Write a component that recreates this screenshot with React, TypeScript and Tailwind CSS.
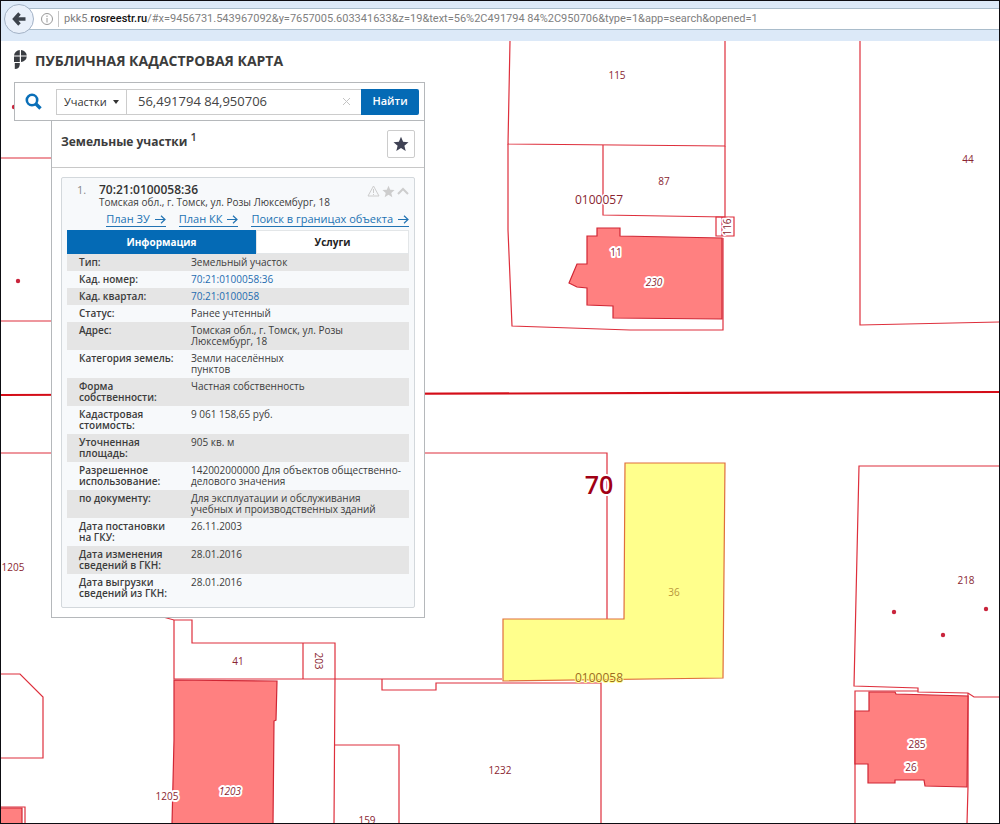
import React, { useState } from 'react';

const rows = [
  { label: 'Тип:', value: 'Земельный участок' },
  { label: 'Кад. номер:', value: '70:21:0100058:36', link: true },
  { label: 'Кад. квартал:', value: '70:21:0100058', link: true },
  { label: 'Статус:', value: 'Ранее учтенный' },
  { label: 'Адрес:', value: 'Томская обл., г. Томск, ул. Розы\nЛюксембург, 18' },
  { label: 'Категория земель:', value: 'Земли населённых\nпунктов' },
  { label: 'Форма\nсобственности:', value: 'Частная собственность' },
  { label: 'Кадастровая\nстоимость:', value: '9 061 158,65 руб.' },
  { label: 'Уточненная\nплощадь:', value: '905 кв. м' },
  { label: 'Разрешенное\nиспользование:', value: '142002000000 Для объектов общественно-\nделового значения' },
  { label: 'по документу:', value: 'Для эксплуатации и обслуживания\nучебных и производственных зданий' },
  { label: 'Дата постановки\nна ГКУ:', value: '26.11.2003' },
  { label: 'Дата изменения\nсведений в ГКН:', value: '28.01.2016' },
  { label: 'Дата выгрузки\nсведений из ГКН:', value: '28.01.2016' },
];

const parcelLines = [
  // block 0100057
  'M510 41 L508 144 L725 146 L725 41',
  'M508 144 L508 230 L512 326 L630 330 L723 330 L723 238',
  'M603 145 L603 215 L725 217 L725 146',
  'M716 217 H734 V236 H716 Z M722 217 V236',
  'M860 41 L860 325 L999 322',
  // left edge, partly under the panel
  'M0 158 H52 M0 321 H52',
  'M0 453 H607 V619',
  'M0 674 H20 L43 697 V758 H0',
  'M0 807 H25 V824',
  // around parcel 41
  'M163 617 L174 620 H192 V643 H335 V679 L334 824',
  'M174 620 V679 H502',
  'M303 643 V679',
  'M382 679 V690 H436 V683 L601 683 V824',
  'M334 745 H399 V824',
  // block 218
  'M999 466 H859 L854 686 L918 688 V692 L968 693 L974 697 H999',
  'M918 691 L855 691 L855 824 M968 693 V787 L967 824',
];

const buildings = [
  '597,228 620,228 620,236 722,238 722,319 613,318 613,306 587,305 587,288 577,287 569,283 577,264 587,264 587,236 597,236',
  '174,680 277,681 276,720 274,721 273,824 172,824 174,740',
  '869,692 895,692 896,694 968,696 967,787 925,786 924,780 895,780 895,783 868,783 868,764 855,764 855,711 869,711',
  '0,808 22,808 22,824 0,824',
];

const points = [
  [18, 281], [894, 612], [943, 635], [986, 609], [14, 107],
];

const mapLabels = [
  { text: '115', x: 617, y: 79 },
  { text: '87', x: 664, y: 185 },
  { text: '44', x: 968, y: 163 },
  { text: '11', x: 616, y: 256, halo: true },
  { text: '230', x: 654, y: 286, halo: true, italic: true },
  { text: '218', x: 966, y: 584 },
  { text: '285', x: 917, y: 748, halo: true },
  { text: '26', x: 911, y: 771, halo: true },
  { text: '41', x: 238, y: 665 },
  { text: '1205', x: 13, y: 571 },
  { text: '1205', x: 167, y: 800, halo: true },
  { text: '1203', x: 230, y: 795, halo: true, italic: true },
  { text: '159', x: 367, y: 824 },
  { text: '1232', x: 500, y: 774 },
];

function CadastralMap() {
  return (
    <svg className="absolute inset-0 h-full w-full" fontFamily="'Open Sans', 'Noto Sans', sans-serif">
      <g transform="translate(-1 -41)">
        <g fill="none" stroke="#de2f3c" strokeWidth="1.2">
          {parcelLines.map((d) => <path key={d} d={d} />)}
        </g>
        <path d="M0 395 L1000 392" stroke="#d40d18" strokeWidth="2.2" />
        <g fill="#ff8080" stroke="#d02634" strokeWidth="1.2">
          {buildings.map((p) => <polygon key={p} points={p} />)}
        </g>
        <polygon points="625,463 725,463 723,678 503,681 503,619 624,619" fill="#ffff8c" stroke="#df6f3c" strokeWidth="1.2" />
        <g fill="#c9243c">
          {points.map(([x, y]) => <circle key={x} cx={x} cy={y} r="2.2" />)}
        </g>
        <g fontSize="10" fill="#8a2631" textAnchor="middle" stroke="#fff" paintOrder="stroke" strokeLinejoin="round">
          {mapLabels.map((l) => (
            <text key={l.text + l.x} x={l.x} y={l.y} strokeWidth={l.halo ? 4 : 0} fontStyle={l.italic ? 'italic' : 'normal'}>
              {l.text}
            </text>
          ))}
          <text transform="translate(731 227) rotate(-90)" strokeWidth="3">116</text>
          <text transform="translate(315 661) rotate(90)" strokeWidth="0">203</text>
          <text x="674" y="596" fill="#b8963c" strokeWidth="0">36</text>
          <text x="599" y="204" fontSize="12" strokeWidth="3">0100057</text>
          <text x="599" y="682" fontSize="12" fill="#9c6a22" stroke="#ffff8c" strokeWidth="2">0100058</text>
          <text x="599" y="494" fontSize="25" fontWeight="600" fill="#a00014" strokeWidth="4">70</text>
        </g>
      </g>
    </svg>
  );
}

function BrowserBar() {
  return (
    <header className="flex h-10 shrink-0 items-center bg-[#dce9f8] pb-1 pl-[3px]">
      <button aria-label="Назад" className="z-10 flex size-[30px] shrink-0 items-center justify-center rounded-full border border-[#a3b2c6] bg-[#e9f0fa]">
        <svg width="14" height="14" viewBox="0 0 14 14" fill="none" stroke="#3d434c" strokeWidth="3.4">
          <path d="M7.5 1.5 L2.5 7 L7.5 12.5 M3 7 H13.5" />
        </svg>
      </button>
      <div className="-ml-2 flex h-[22px] min-w-0 flex-1 items-center border-y border-[#a9bccb] bg-white pl-[14px]">
        <svg width="14" height="14" viewBox="0 0 14 14" fill="none" stroke="#999" className="shrink-0">
          <circle cx="7" cy="7" r="5.5" />
          <path d="M7 6 V10.5 M7 3.5 V5" />
        </svg>
        <span className="mr-[5px] ml-1 h-4 w-px bg-[#c5c5c5]" />
        <p className="truncate font-[Roboto,sans-serif] text-[11px] text-[#808080]">
          pkk5.<span className="font-medium text-[#111]">rosreestr.ru</span>/#x=9456731.543967092&amp;y=7657005.603341633&amp;z=19&amp;text=56%2C491794 84%2C950706&amp;type=1&amp;app=search&amp;opened=1
        </p>
      </div>
    </header>
  );
}

function StarIcon({ size }: { size: number }) {
  return (
    <svg width={size} height={size} viewBox="0 0 16 16" fill="currentColor">
      <path d="M8 .8 L10.1 5.8 L15.5 6.2 L11.4 9.7 L12.7 15 L8 12.1 L3.3 15 L4.6 9.7 L.5 6.2 L5.9 5.8 Z" />
    </svg>
  );
}

function PlanLink({ href, children }: { href: string; children: React.ReactNode }) {
  return (
    <a href={href} className="flex items-center gap-[5px] border-b border-[#2273b3]">
      {children}
      <svg width="11" height="9" viewBox="0 0 11 9" fill="none" stroke="currentColor" strokeWidth="1.2">
        <path d="M0 4.500 H10 M6 .8 L10 4.500 L6 8.200" />
      </svg>
    </a>
  );
}

function SearchBar() {
  const [query, setQuery] = useState('56,491794 84,950706');

  return (
    <form onSubmit={(e) => e.preventDefault()} className="flex items-center border border-[#b5b8bb] bg-white p-[5px]">
      <svg width="36" height="18" viewBox="0 0 36 18" fill="none" stroke="#0a6fb8" strokeWidth="2.6" className="shrink-0">
        <circle cx="12" cy="7" r="5.2" />
        <path d="M15.5 10.500 L20.500 15.500" strokeWidth="3.4" />
      </svg>
      <div className="relative w-[71px] shrink-0">
        <select aria-label="Тип объекта" className="h-[26px] w-full appearance-none border border-[#ccc] bg-white pl-[7px] text-[11px] text-[#333]">
          <option>Участки</option>
        </select>
        <svg width="6" height="4" className="pointer-events-none absolute top-3 right-2">
          <path d="M0 0 H6 L3 4 Z" fill="#333" />
        </svg>
      </div>
      <div className="flex h-[26px] min-w-0 flex-1 items-center border-y border-[#ccc] pr-[10px] pl-[11px]">
        <input aria-label="Поиск" value={query} onChange={(e) => setQuery(e.target.value)} className="min-w-0 flex-1 text-[13px] text-[#444] outline-none" />
        <button type="button" aria-label="Очистить" onClick={() => setQuery('')}>
          <svg width="9" height="9" stroke="#c4c4c4"><path d="M1 1 L8 8 M8 1 L1 8" /></svg>
        </button>
      </div>
      <button className="h-[26px] w-[58px] shrink-0 rounded-r-xs bg-[#046ab5] text-[11px] font-semibold text-white">Найти</button>
    </form>
  );
}

function ResultCard() {
  return (
    <article className="rounded-xs border border-[#d3d8dc] bg-[#f7f9fb] p-[5px] text-[10px] leading-[11px]">
      <div className="flex pl-[10px]">
        <span className="w-[22px] text-[11px] leading-[14px] text-[#888]">1.</span>
        <div className="flex-1">
          <h3 className="text-[12px] leading-[14px] font-semibold text-[#333]">70:21:0100058:36</h3>
          <p>Томская обл., г. Томск, ул. Розы Люксембург, 18</p>
        </div>
        <div className="flex h-4 items-center gap-0.5 text-[#cdcdcd]">
          <svg width="13" height="12" fill="none" stroke="currentColor">
            <path d="M6.500 1 L12 11 H1 Z M6.500 4 V8 M6.500 9 V10" />
          </svg>
          <StarIcon size={13} />
          <svg width="12" height="8" fill="none" stroke="currentColor" strokeWidth="2"><path d="M1 7 L6 2 L11 7" /></svg>
        </div>
      </div>
      <nav className="mt-1 mb-[3px] flex justify-end gap-[13px] text-[11px] leading-[14px] text-[#2273b3]">
        <PlanLink href="#zu">План ЗУ</PlanLink>
        <PlanLink href="#kk">План КК</PlanLink>
        <PlanLink href="#search">Поиск в границах объекта</PlanLink>
      </nav>
      <div className="flex h-6 text-[10px] font-bold">
        <button className="w-[189px] bg-[#046ab5] text-white">Информация</button>
        <button className="flex-1 border border-[#e3e6e8] bg-white text-[#222]">Услуги</button>
      </div>
      <table className="w-full text-left">
        <tbody>
          {rows.map((row) => (
            <tr key={row.label} className="align-top whitespace-pre-line odd:bg-[#e5e5e5]">
              <th className="w-[124px] py-[3px] pl-3 font-semibold">{row.label}</th>
              <td className="py-[3px]">
                {row.link ? <a href="#parcel" className="text-[#1e6cb0]">{row.value}</a> : row.value}
              </td>
            </tr>
          ))}
        </tbody>
      </table>
    </article>
  );
}

export default function App() {
  return (
    <div className="flex min-h-screen flex-col border border-[#0d0d12] bg-white font-['Open_Sans','Noto_Sans',sans-serif] text-[#3c3c3c]">
      <BrowserBar />
      <main className="relative flex-1 overflow-hidden">
        <CadastralMap />
        <div className="relative w-full max-w-[424px] pt-2 pb-4 pl-[13px]">
          <div className="mb-[11px] flex h-[22px] items-center gap-2">
            <svg width="13" height="20" viewBox="0 0 13 20" fill="#3a3d42">
              <path d="M0 5.500 A6 6 0 0 1 5.800 0 V5.500 Z M7 0 A6 6 0 0 1 12.800 5.500 H7 Z M0 6.500 H5.800 V12 H0 Z M7 6.500 H12.800 A6 6 0 0 1 7 12 Z M.8 13 H5.800 V14.500 A5 5 0 0 1 .8 19 Z" />
            </svg>
            <h1 className="text-[14px] font-bold whitespace-nowrap">ПУБЛИЧНАЯ КАДАСТРОВАЯ КАРТА</h1>
          </div>
          <SearchBar />
          <section className="ml-[37px] border border-t-0 border-[#b5b8bb] bg-white">
            <div className="flex h-[47px] items-center justify-between border-b border-[#c8c8c8] pr-[9px] pl-[9px]">
              <h2 className="pb-1 text-[12px] font-bold">Земельные участки <sup className="text-[11px] font-semibold">1</sup></h2>
              <button aria-label="Избранное" className="flex size-7 items-center justify-center rounded-xs border border-[#ccc] text-[#3f4254]">
                <StarIcon size={16} />
              </button>
            </div>
            <div className="p-[9px]">
              <ResultCard />
            </div>
          </section>
        </div>
      </main>
    </div>
  );
}
